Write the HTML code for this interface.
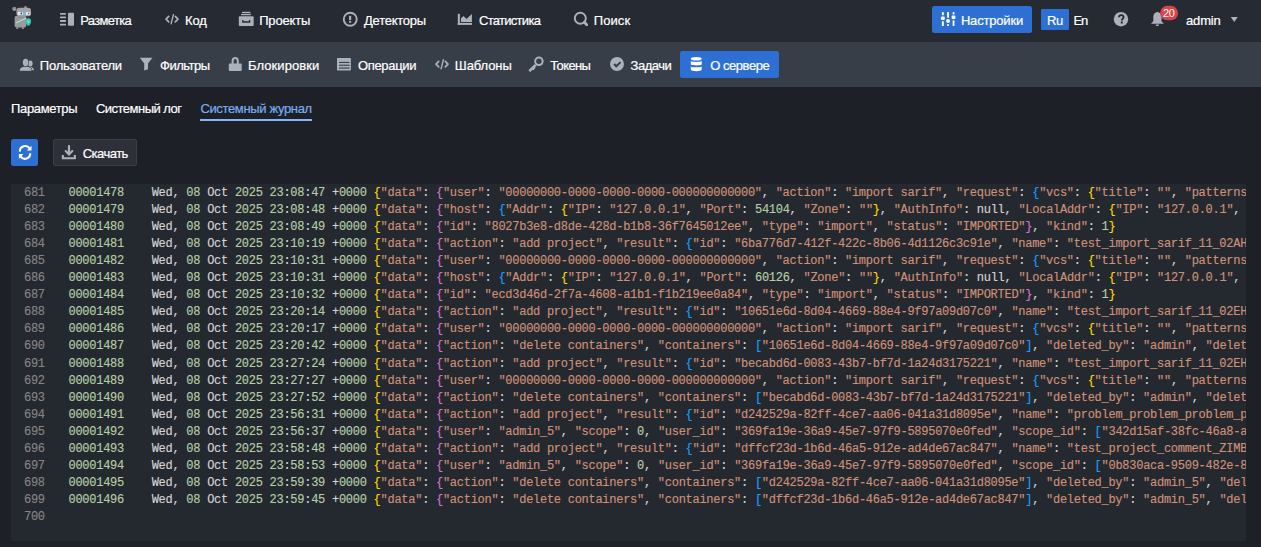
<!DOCTYPE html>
<html><head><meta charset="utf-8"><style>
*{margin:0;padding:0;box-sizing:border-box}
html,body{width:1261px;height:547px;overflow:hidden;background:#1d2026;font-family:"Liberation Sans",sans-serif;color:#fff}
.abs{position:absolute}
.t{position:absolute;font-size:13px;line-height:16px;white-space:nowrap;color:#fff;-webkit-text-stroke:0.2px currentColor}
#hdr{position:absolute;left:0;top:0;width:1261px;height:42px;background:#262a33}
#sub{position:absolute;left:0;top:42px;width:1261px;height:45px;background:#383e48}
svg.ic{position:absolute;overflow:visible}
.btn{position:absolute;background:#2e6fd4;border-radius:2.5px}
#panel{position:absolute;left:11px;top:184px;width:1235px;height:357px;background:#24282f;overflow:hidden}
.ln{position:absolute;left:0;height:17.1px;width:1235px;font-family:"Liberation Mono",monospace;font-size:12px;letter-spacing:-0.27px;line-height:17.1px;white-space:pre;color:#d4d4d4;-webkit-text-stroke:0.15px currentColor}
.ln b{position:absolute;left:13px;font-weight:normal;color:#858585}
.ln span{position:absolute;left:57.5px}
i{font-style:normal}
i.n{color:#b5cea8}
i.s{color:#ce9178}
</style></head><body>
<div id="hdr"></div>
<div id="sub"></div>

<div class="btn" style="left:932px;top:6px;width:100px;height:27px"></div>
<div class="btn" style="left:1041px;top:9px;width:28px;height:21px;border-radius:1px"></div>
<div class="btn" style="left:680px;top:51px;width:99px;height:27px"></div>
<div class="abs" style="left:200px;top:119px;width:112px;height:2px;background:#86b6f6"></div>
<div class="btn" style="left:11px;top:139px;width:27px;height:27px"></div>
<div class="abs" style="left:53px;top:139px;width:84px;height:27px;background:#2d3038;border:1px solid #3b3f47;border-radius:2px"></div>
<div class="t" style="left:80.3px;top:13.0px;letter-spacing:-0.686px;color:#ffffff">Разметка</div>
<div class="t" style="left:185.1px;top:13.0px;letter-spacing:-0.15px;color:#ffffff">Код</div>
<div class="t" style="left:259.2px;top:13.0px;letter-spacing:-0.183px;color:#ffffff">Проекты</div>
<div class="t" style="left:364.0px;top:13.0px;letter-spacing:-0.238px;color:#ffffff">Детекторы</div>
<div class="t" style="left:479.0px;top:13.0px;letter-spacing:-0.711px;color:#ffffff">Статистика</div>
<div class="t" style="left:593.7px;top:13.0px;letter-spacing:0.1px;color:#ffffff">Поиск</div>
<div class="t" style="left:960.9px;top:13.0px;letter-spacing:-0.175px;color:#ffffff">Настройки</div>
<div class="t" style="left:1047.0px;top:13.0px;letter-spacing:-0.5px;color:#ffffff">Ru</div>
<div class="t" style="left:1073.4px;top:13.0px;letter-spacing:-1.0px;color:#ffffff">En</div>
<div class="t" style="left:1186.0px;top:13.0px;letter-spacing:-0.15px;color:#ffffff">admin</div>
<div class="t" style="left:39.85px;top:58.0px;letter-spacing:-0.241px;color:#ffffff">Пользователи</div>
<div class="t" style="left:160.0px;top:58.0px;letter-spacing:-0.5px;color:#ffffff">Фильтры</div>
<div class="t" style="left:248.1px;top:58.0px;letter-spacing:0.056px;color:#ffffff">Блокировки</div>
<div class="t" style="left:357.9px;top:58.0px;letter-spacing:-0.314px;color:#ffffff">Операции</div>
<div class="t" style="left:454.8px;top:58.0px;letter-spacing:-0.083px;color:#ffffff">Шаблоны</div>
<div class="t" style="left:550.2px;top:58.0px;letter-spacing:-0.6px;color:#ffffff">Токены</div>
<div class="t" style="left:630.5px;top:58.0px;letter-spacing:-0.46px;color:#ffffff">Задачи</div>
<div class="t" style="left:710.2px;top:58.0px;letter-spacing:-0.45px;color:#ffffff">О сервере</div>
<div class="t" style="left:11.1px;top:101.0px;letter-spacing:-0.362px;color:#ffffff">Параметры</div>
<div class="t" style="left:95.9px;top:101.0px;letter-spacing:-0.508px;color:#ffffff">Системный лог</div>
<div class="t" style="left:200.4px;top:101.0px;letter-spacing:-0.347px;color:#78aef0">Системный журнал</div>
<div class="t" style="left:82.7px;top:146.0px;letter-spacing:-0.517px;color:#ffffff">Скачать</div>
<svg width="1261" height="547" viewBox="0 0 1261 547" style="position:absolute;left:0;top:0;pointer-events:none">
<g fill="#acb1ba" stroke="none">
  <!-- Разметка icon -->
  <rect x="60" y="12.9" width="6" height="1.8" rx="0.6"/>
  <rect x="60" y="16.5" width="6" height="1.8" rx="0.6"/>
  <rect x="60" y="20.1" width="6" height="1.8" rx="0.6"/>
  <rect x="60" y="23.7" width="6" height="1.8" rx="0.6"/>
  <rect x="68" y="12.8" width="6" height="12.9" rx="0.8"/>
  <!-- Projects (archive) -->
  <rect x="242" y="11.8" width="8.5" height="1.3" rx="0.4"/>
  <rect x="241" y="13.8" width="10" height="1.4" rx="0.4"/>
  <rect x="238.8" y="16.3" width="14.9" height="9.6" rx="1"/>
  <!-- Stats -->
  <rect x="457.8" y="13.8" width="2.1" height="11.1"/>
  <rect x="457.8" y="22.9" width="14.2" height="2"/>
  <path d="M461 21.9 L461 18.2 L463.5 16 L466.5 18.9 L471.9 14 L471.9 21.9 Z"/>
  <!-- Sub nav: users -->
  <ellipse cx="30.3" cy="63.4" rx="2.3" ry="3"/>
  <path d="M29 66.5 C31.5 66.8 33.9 67.6 33.9 69.8 L33.9 70.3 L30 70.3 Z"/>
  <g stroke="#383e48" stroke-width="1.1">
  <ellipse cx="25.6" cy="62.4" rx="2.75" ry="3.6"/>
  <path d="M19.6 70.9 C19.6 67.7 21.8 66.5 25.6 66.5 C29.4 66.5 31.8 67.7 31.8 70.9 Z"/>
  </g>
  <ellipse cx="25.6" cy="62.4" rx="2.75" ry="3.6"/>
  <path d="M19.8 70.7 C19.8 67.7 22 66.7 25.6 66.7 C29.2 66.7 31.6 67.7 31.6 70.7 Z"/>
  <!-- filter -->
  <path d="M139.8 57.8 L152.5 57.8 L148 63.4 L148 69.3 L144.2 70.5 L144.2 63.4 Z"/>
  <!-- lock body -->
  <rect x="228.8" y="63.6" width="12.9" height="7.3" rx="0.8"/>
  <!-- operations -->
  <rect x="337" y="58" width="13.9" height="12.5" rx="0.8"/>
  <!-- check circle -->
  <circle cx="617" cy="64" r="6.95"/>
  <!-- download tray -->
  <path d="M61.8 154.9 H63.9 V157.3 H73.8 V154.9 H75.9 V159.3 H61.8 Z"/>
  <!-- ? circle -->
  <circle cx="1121" cy="19.2" r="7.2"/>
  <!-- bell -->
  <path d="M1157.4 12 C1154.2 12.6 1153.3 15 1153.3 17.6 L1153.3 21.2 L1150.9 23.8 L1163.9 23.8 L1161.5 21.2 L1161.5 17.6 C1161.5 15 1160.6 12.6 1157.4 12 Z"/>
  <path d="M1155.7 24.4 H1159 C1159 25.4 1158.3 26.1 1157.35 26.1 C1156.4 26.1 1155.7 25.4 1155.7 24.4 Z"/>
  <!-- caret -->
  <path d="M1230.7 16.9 L1237.8 16.9 L1234.25 22 Z"/>
</g>
<g fill="none" stroke="#acb1ba" stroke-width="2">
  <!-- </> top -->
  <path d="M168.7 16.3 L166 19.05 L168.7 21.8" stroke-width="1.7" stroke-linecap="round" stroke-linejoin="round"/>
  <path d="M175.3 16.3 L178 19.05 L175.3 21.8" stroke-width="1.7" stroke-linecap="round" stroke-linejoin="round"/>
  <path d="M173.4 14.7 L171.1 23.8" stroke-width="1.4" stroke-linecap="round"/>
  <!-- </> sub -->
  <path d="M438.7 61.3 L436 64.05 L438.7 66.8" stroke-width="1.7" stroke-linecap="round" stroke-linejoin="round"/>
  <path d="M445.3 61.3 L448 64.05 L445.3 66.8" stroke-width="1.7" stroke-linecap="round" stroke-linejoin="round"/>
  <path d="M443.4 59.7 L441.1 68.8" stroke-width="1.4" stroke-linecap="round"/>
  <!-- detector circle -->
  <circle cx="350.25" cy="19.25" r="6.5" stroke-width="1.9"/>
  <!-- search -->
  <circle cx="580.3" cy="18.3" r="5.5" stroke-width="1.9"/>
  <path d="M584.3 22.3 L586.7 24.7" stroke-width="2.8" stroke-linecap="round"/>
  <!-- lock shackle -->
  <path d="M232.6 64 V61 C232.6 58.6 233.6 57.9 235.2 57.9 C236.8 57.9 237.8 58.6 237.8 61 V64" stroke-width="2"/>
  <!-- key ring -->
  <circle cx="538.9" cy="61.3" r="3.75" stroke-width="2"/>
  <!-- download arrow -->
  <path d="M69 145.2 V155" stroke-width="2.2"/>
  <path d="M65.7 151 L69 154.4 L72.3 151" stroke-width="2.1" stroke-linecap="round"/>
</g>
<g fill="#acb1ba">
  <!-- key shaft & teeth -->
  <path d="M534.8 63.9 L536.7 65.8 L530.3 72 L528.4 70.2 Z"/>
  <path d="M531.2 67.9 L533.5 65.8 L535.6 68 L533.4 70.3 L532.6 69.5 L531.8 70.3 Z"/>
</g>
<!-- detector exclamation -->
<rect x="349" y="15.8" width="2.2" height="4.3" fill="#acb1ba"/>
<rect x="349" y="20.9" width="2.2" height="1.8" fill="#acb1ba"/>
<!-- operations lines -->
<g fill="#383e48">
  <rect x="339" y="61.9" width="10.5" height="1.1"/>
  <rect x="339" y="64.7" width="10.5" height="1.1"/>
  <rect x="339" y="67.5" width="10.5" height="1.1"/>
</g>
<!-- archive handle -->
<path d="M242.8 19.9 V22 H249.6 V19.9" fill="none" stroke="#262a33" stroke-width="1.3"/>
<!-- check mark -->
<path d="M614.1 64 L616.3 66.3 L620.5 62.1" fill="none" stroke="#383e48" stroke-width="2"/>
<!-- ? glyph -->
<path d="M1119 17.3 C1119 15.8 1119.9 15.1 1121.2 15.1 C1122.6 15.1 1123.5 15.9 1123.5 17.1 C1123.5 18.7 1121.8 18.9 1121.8 20.5" fill="none" stroke="#262a33" stroke-width="1.9"/>
<rect x="1120.8" y="21.5" width="2" height="2" fill="#262a33"/>
<!-- sliders icon (white) -->
<g fill="#ffffff">
  <rect x="941.9" y="11.9" width="1.9" height="3.4" rx="0.9"/>
  <rect x="940.9" y="16.6" width="3.9" height="3.4" rx="1.2"/>
  <rect x="941.9" y="21.2" width="1.9" height="4.8" rx="0.6"/>
  <rect x="947.1" y="11.9" width="1.9" height="5.9" rx="0.6"/>
  <circle cx="948.05" cy="20.9" r="2"/>
  <rect x="947.1" y="24" width="1.9" height="2" rx="0.5"/>
  <rect x="952.6" y="11.9" width="1.9" height="2.6" rx="0.9"/>
  <rect x="951.7" y="15.6" width="3.7" height="3.4" rx="0.8"/>
  <rect x="952.6" y="20.3" width="1.9" height="5.8" rx="0.6"/>
</g>
<!-- DB icon (white) -->
<g fill="#ffffff">
  <ellipse cx="696.25" cy="58.8" rx="5.45" ry="1.8"/>
  <path d="M690.8 61 C692.5 62.2 700 62.2 701.7 61 V64.6 C700 65.8 692.5 65.8 690.8 64.6 Z"/>
  <path d="M690.8 66.4 C692.5 67.6 700 67.6 701.7 66.4 V69.6 C701.7 70.8 699 71.3 696.25 71.3 C693.5 71.3 690.8 70.8 690.8 69.6 Z"/>
</g>
<!-- sync icon (white) -->
<g fill="none" stroke="#ffffff" stroke-width="2.1">
  <path d="M19.9 151.6 A5.3 5.3 0 0 1 29.6 148.4"/>
  <path d="M30.2 153.2 A5.3 5.3 0 0 1 20.5 156.4"/>
</g>
<g fill="#ffffff">
  <path d="M31.5 145.8 L31.5 150.6 L26.9 150.6 Z"/>
  <path d="M18.9 158.8 L18.9 154 L23.5 154 Z"/>
</g>
<!-- badge -->
<rect x="1160.1" y="5.85" width="17.9" height="14.4" rx="7.2" fill="#d9434b"/>
<!-- logo -->
<g>
  <circle cx="14.3" cy="8.9" r="2.1" fill="#8c8c8c"/>
  <circle cx="14.4" cy="9.4" r="0.75" fill="#7cc0f0"/>
  <circle cx="25.5" cy="7.3" r="1.4" fill="#8c8c8c"/>
  <path d="M16.4 10.5 C16.4 8.6 17.6 7.8 19.5 7.8 L28 7.8 C30 7.8 31 9 31 11 L31 13.5 C31 15.5 30 16.3 28 16.3 L19.5 16.3 C17.6 16.3 16.4 15.5 16.4 13.5 Z" fill="#a3a3a3"/>
  <path d="M14.6 18 C14.6 16.6 15.5 15.8 17 15.8 L24 15.8 C25.5 15.8 26.2 16.6 26.2 18 L26.2 25.5 C26.2 26.8 25.5 27.5 24 27.5 L17 27.5 C15.5 27.5 14.6 26.8 14.6 25.5 Z" fill="#9b9b9b"/>
  <rect x="17.4" y="16.8" width="6.5" height="1" fill="#888"/>
  <rect x="16.2" y="26.8" width="2.2" height="2.2" rx="0.6" fill="#8a8a8a"/>
  <rect x="21.8" y="26.8" width="2.2" height="2.2" rx="0.6" fill="#8a8a8a"/>
  <rect x="17.8" y="12" width="12.4" height="2.9" fill="#ececec"/>
  <rect x="20.6" y="12.6" width="1.5" height="1.7" fill="#2a2d35"/>
  <rect x="23" y="11.8" width="3.1" height="3.2" fill="#6db6ee"/>
  <rect x="28.2" y="12.7" width="1.2" height="1.5" fill="#4a5060"/>
  <path d="M15.6 22.5 L26.2 17.5 L26.7 18.5 L16.1 23.5 Z" fill="#9fe3da"/>
  <path d="M25.8 19.3 L28.4 18.1 L31 19.3 L31 22.6 C30.6 24.5 29.4 25.6 28.4 26.1 C27.2 25.5 25.8 24.3 25.8 22.6 Z" fill="#31c2ae"/>
  <path d="M27.3 20.6 L29.5 20.6 L29.5 22.2 C29.2 23 28.8 23.3 28.4 23.5 C28 23.3 27.3 23 27.3 22.2 Z" fill="#7fdccf"/>
</g>
</svg>
<div class="t" style="left:1163px;top:5px;font-size:11px;line-height:16px;letter-spacing:-0.3px;-webkit-text-stroke:0">20</div>

<div id="panel">
<div class="ln" style="top:0.50px"><b>681</b><span><i class="n">00001478</i>    Wed, <i class="n">08</i> Oct <i class="n">2025</i> <i class="n">23</i>:<i class="n">08</i>:<i class="n">47</i> +<i class="n">0000</i> <i style="color:#ffd700">{</i><i class="s">"data"</i>: <i style="color:#da70d6">{</i><i class="s">"user"</i>: <i class="s">"00000000-0000-0000-0000-000000000000"</i>, <i class="s">"action"</i>: <i class="s">"import sarif"</i>, <i class="s">"request"</i>: <i style="color:#179fff">{</i><i class="s">"vcs"</i>: <i style="color:#ffd700">{</i><i class="s">"title"</i>: <i class="s">""</i>, <i class="s">"patterns"</i>: <i style="color:#da70d6">[</i><i style="color:#da70d6">]</i><i style="color:#ffd700">}</i><i style="color:#179fff">}</i></span></div>
<div class="ln" style="top:17.60px"><b>682</b><span><i class="n">00001479</i>    Wed, <i class="n">08</i> Oct <i class="n">2025</i> <i class="n">23</i>:<i class="n">08</i>:<i class="n">48</i> +<i class="n">0000</i> <i style="color:#ffd700">{</i><i class="s">"data"</i>: <i style="color:#da70d6">{</i><i class="s">"host"</i>: <i style="color:#179fff">{</i><i class="s">"Addr"</i>: <i style="color:#ffd700">{</i><i class="s">"IP"</i>: <i class="s">"127.0.0.1"</i>, <i class="s">"Port"</i>: <i class="n">54104</i>, <i class="s">"Zone"</i>: <i class="s">""</i><i style="color:#ffd700">}</i>, <i class="s">"AuthInfo"</i>: null, <i class="s">"LocalAddr"</i>: <i style="color:#ffd700">{</i><i class="s">"IP"</i>: <i class="s">"127.0.0.1"</i>, <i class="s">"Port"</i>: <i class="n">8080</i><i style="color:#ffd700">}</i><i style="color:#179fff">}</i><i style="color:#da70d6">}</i><i style="color:#ffd700">}</i></span></div>
<div class="ln" style="top:34.70px"><b>683</b><span><i class="n">00001480</i>    Wed, <i class="n">08</i> Oct <i class="n">2025</i> <i class="n">23</i>:<i class="n">08</i>:<i class="n">49</i> +<i class="n">0000</i> <i style="color:#ffd700">{</i><i class="s">"data"</i>: <i style="color:#da70d6">{</i><i class="s">"id"</i>: <i class="s">"8027b3e8-d8de-428d-b1b8-36f7645012ee"</i>, <i class="s">"type"</i>: <i class="s">"import"</i>, <i class="s">"status"</i>: <i class="s">"IMPORTED"</i><i style="color:#da70d6">}</i>, <i class="s">"kind"</i>: <i class="n">1</i><i style="color:#ffd700">}</i></span></div>
<div class="ln" style="top:51.80px"><b>684</b><span><i class="n">00001481</i>    Wed, <i class="n">08</i> Oct <i class="n">2025</i> <i class="n">23</i>:<i class="n">10</i>:<i class="n">19</i> +<i class="n">0000</i> <i style="color:#ffd700">{</i><i class="s">"data"</i>: <i style="color:#da70d6">{</i><i class="s">"action"</i>: <i class="s">"add project"</i>, <i class="s">"result"</i>: <i style="color:#179fff">{</i><i class="s">"id"</i>: <i class="s">"6ba776d7-412f-422c-8b06-4d1126c3c91e"</i>, <i class="s">"name"</i>: <i class="s">"test_import_sarif_11_02AHXX"</i><i style="color:#179fff">}</i><i style="color:#da70d6">}</i><i style="color:#ffd700">}</i></span></div>
<div class="ln" style="top:68.90px"><b>685</b><span><i class="n">00001482</i>    Wed, <i class="n">08</i> Oct <i class="n">2025</i> <i class="n">23</i>:<i class="n">10</i>:<i class="n">31</i> +<i class="n">0000</i> <i style="color:#ffd700">{</i><i class="s">"data"</i>: <i style="color:#da70d6">{</i><i class="s">"user"</i>: <i class="s">"00000000-0000-0000-0000-000000000000"</i>, <i class="s">"action"</i>: <i class="s">"import sarif"</i>, <i class="s">"request"</i>: <i style="color:#179fff">{</i><i class="s">"vcs"</i>: <i style="color:#ffd700">{</i><i class="s">"title"</i>: <i class="s">""</i>, <i class="s">"patterns"</i>: <i style="color:#da70d6">[</i><i style="color:#da70d6">]</i><i style="color:#ffd700">}</i><i style="color:#179fff">}</i></span></div>
<div class="ln" style="top:86.00px"><b>686</b><span><i class="n">00001483</i>    Wed, <i class="n">08</i> Oct <i class="n">2025</i> <i class="n">23</i>:<i class="n">10</i>:<i class="n">31</i> +<i class="n">0000</i> <i style="color:#ffd700">{</i><i class="s">"data"</i>: <i style="color:#da70d6">{</i><i class="s">"host"</i>: <i style="color:#179fff">{</i><i class="s">"Addr"</i>: <i style="color:#ffd700">{</i><i class="s">"IP"</i>: <i class="s">"127.0.0.1"</i>, <i class="s">"Port"</i>: <i class="n">60126</i>, <i class="s">"Zone"</i>: <i class="s">""</i><i style="color:#ffd700">}</i>, <i class="s">"AuthInfo"</i>: null, <i class="s">"LocalAddr"</i>: <i style="color:#ffd700">{</i><i class="s">"IP"</i>: <i class="s">"127.0.0.1"</i>, <i class="s">"Port"</i>: <i class="n">8080</i><i style="color:#ffd700">}</i><i style="color:#179fff">}</i><i style="color:#da70d6">}</i><i style="color:#ffd700">}</i></span></div>
<div class="ln" style="top:103.10px"><b>687</b><span><i class="n">00001484</i>    Wed, <i class="n">08</i> Oct <i class="n">2025</i> <i class="n">23</i>:<i class="n">10</i>:<i class="n">32</i> +<i class="n">0000</i> <i style="color:#ffd700">{</i><i class="s">"data"</i>: <i style="color:#da70d6">{</i><i class="s">"id"</i>: <i class="s">"ecd3d46d-2f7a-4608-a1b1-f1b219ee0a84"</i>, <i class="s">"type"</i>: <i class="s">"import"</i>, <i class="s">"status"</i>: <i class="s">"IMPORTED"</i><i style="color:#da70d6">}</i>, <i class="s">"kind"</i>: <i class="n">1</i><i style="color:#ffd700">}</i></span></div>
<div class="ln" style="top:120.20px"><b>688</b><span><i class="n">00001485</i>    Wed, <i class="n">08</i> Oct <i class="n">2025</i> <i class="n">23</i>:<i class="n">20</i>:<i class="n">14</i> +<i class="n">0000</i> <i style="color:#ffd700">{</i><i class="s">"data"</i>: <i style="color:#da70d6">{</i><i class="s">"action"</i>: <i class="s">"add project"</i>, <i class="s">"result"</i>: <i style="color:#179fff">{</i><i class="s">"id"</i>: <i class="s">"10651e6d-8d04-4669-88e4-9f97a09d07c0"</i>, <i class="s">"name"</i>: <i class="s">"test_import_sarif_11_02EHXX"</i><i style="color:#179fff">}</i><i style="color:#da70d6">}</i><i style="color:#ffd700">}</i></span></div>
<div class="ln" style="top:137.30px"><b>689</b><span><i class="n">00001486</i>    Wed, <i class="n">08</i> Oct <i class="n">2025</i> <i class="n">23</i>:<i class="n">20</i>:<i class="n">17</i> +<i class="n">0000</i> <i style="color:#ffd700">{</i><i class="s">"data"</i>: <i style="color:#da70d6">{</i><i class="s">"user"</i>: <i class="s">"00000000-0000-0000-0000-000000000000"</i>, <i class="s">"action"</i>: <i class="s">"import sarif"</i>, <i class="s">"request"</i>: <i style="color:#179fff">{</i><i class="s">"vcs"</i>: <i style="color:#ffd700">{</i><i class="s">"title"</i>: <i class="s">""</i>, <i class="s">"patterns"</i>: <i style="color:#da70d6">[</i><i style="color:#da70d6">]</i><i style="color:#ffd700">}</i><i style="color:#179fff">}</i></span></div>
<div class="ln" style="top:154.40px"><b>690</b><span><i class="n">00001487</i>    Wed, <i class="n">08</i> Oct <i class="n">2025</i> <i class="n">23</i>:<i class="n">20</i>:<i class="n">42</i> +<i class="n">0000</i> <i style="color:#ffd700">{</i><i class="s">"data"</i>: <i style="color:#da70d6">{</i><i class="s">"action"</i>: <i class="s">"delete containers"</i>, <i class="s">"containers"</i>: <i style="color:#179fff">[</i><i class="s">"10651e6d-8d04-4669-88e4-9f97a09d07c0"</i><i style="color:#179fff">]</i>, <i class="s">"deleted_by"</i>: <i class="s">"admin"</i>, <i class="s">"deleted"</i>: true<i style="color:#da70d6">}</i><i style="color:#ffd700">}</i></span></div>
<div class="ln" style="top:171.50px"><b>691</b><span><i class="n">00001488</i>    Wed, <i class="n">08</i> Oct <i class="n">2025</i> <i class="n">23</i>:<i class="n">27</i>:<i class="n">24</i> +<i class="n">0000</i> <i style="color:#ffd700">{</i><i class="s">"data"</i>: <i style="color:#da70d6">{</i><i class="s">"action"</i>: <i class="s">"add project"</i>, <i class="s">"result"</i>: <i style="color:#179fff">{</i><i class="s">"id"</i>: <i class="s">"becabd6d-0083-43b7-bf7d-1a24d3175221"</i>, <i class="s">"name"</i>: <i class="s">"test_import_sarif_11_02EHXX"</i><i style="color:#179fff">}</i><i style="color:#da70d6">}</i><i style="color:#ffd700">}</i></span></div>
<div class="ln" style="top:188.60px"><b>692</b><span><i class="n">00001489</i>    Wed, <i class="n">08</i> Oct <i class="n">2025</i> <i class="n">23</i>:<i class="n">27</i>:<i class="n">27</i> +<i class="n">0000</i> <i style="color:#ffd700">{</i><i class="s">"data"</i>: <i style="color:#da70d6">{</i><i class="s">"user"</i>: <i class="s">"00000000-0000-0000-0000-000000000000"</i>, <i class="s">"action"</i>: <i class="s">"import sarif"</i>, <i class="s">"request"</i>: <i style="color:#179fff">{</i><i class="s">"vcs"</i>: <i style="color:#ffd700">{</i><i class="s">"title"</i>: <i class="s">""</i>, <i class="s">"patterns"</i>: <i style="color:#da70d6">[</i><i style="color:#da70d6">]</i><i style="color:#ffd700">}</i><i style="color:#179fff">}</i></span></div>
<div class="ln" style="top:205.70px"><b>693</b><span><i class="n">00001490</i>    Wed, <i class="n">08</i> Oct <i class="n">2025</i> <i class="n">23</i>:<i class="n">27</i>:<i class="n">52</i> +<i class="n">0000</i> <i style="color:#ffd700">{</i><i class="s">"data"</i>: <i style="color:#da70d6">{</i><i class="s">"action"</i>: <i class="s">"delete containers"</i>, <i class="s">"containers"</i>: <i style="color:#179fff">[</i><i class="s">"becabd6d-0083-43b7-bf7d-1a24d3175221"</i><i style="color:#179fff">]</i>, <i class="s">"deleted_by"</i>: <i class="s">"admin"</i>, <i class="s">"deleted"</i>: true<i style="color:#da70d6">}</i><i style="color:#ffd700">}</i></span></div>
<div class="ln" style="top:222.80px"><b>694</b><span><i class="n">00001491</i>    Wed, <i class="n">08</i> Oct <i class="n">2025</i> <i class="n">23</i>:<i class="n">56</i>:<i class="n">31</i> +<i class="n">0000</i> <i style="color:#ffd700">{</i><i class="s">"data"</i>: <i style="color:#da70d6">{</i><i class="s">"action"</i>: <i class="s">"add project"</i>, <i class="s">"result"</i>: <i style="color:#179fff">{</i><i class="s">"id"</i>: <i class="s">"d242529a-82ff-4ce7-aa06-041a31d8095e"</i>, <i class="s">"name"</i>: <i class="s">"problem_problem_problem_problem"</i><i style="color:#179fff">}</i><i style="color:#da70d6">}</i><i style="color:#ffd700">}</i></span></div>
<div class="ln" style="top:239.90px"><b>695</b><span><i class="n">00001492</i>    Wed, <i class="n">08</i> Oct <i class="n">2025</i> <i class="n">23</i>:<i class="n">56</i>:<i class="n">37</i> +<i class="n">0000</i> <i style="color:#ffd700">{</i><i class="s">"data"</i>: <i style="color:#da70d6">{</i><i class="s">"user"</i>: <i class="s">"admin_5"</i>, <i class="s">"scope"</i>: <i class="n">0</i>, <i class="s">"user_id"</i>: <i class="s">"369fa19e-36a9-45e7-97f9-5895070e0fed"</i>, <i class="s">"scope_id"</i>: <i style="color:#179fff">[</i><i class="s">"342d15af-38fc-46a8-a000-000000000000"</i><i style="color:#179fff">]</i><i style="color:#da70d6">}</i><i style="color:#ffd700">}</i></span></div>
<div class="ln" style="top:257.00px"><b>696</b><span><i class="n">00001493</i>    Wed, <i class="n">08</i> Oct <i class="n">2025</i> <i class="n">23</i>:<i class="n">58</i>:<i class="n">48</i> +<i class="n">0000</i> <i style="color:#ffd700">{</i><i class="s">"data"</i>: <i style="color:#da70d6">{</i><i class="s">"action"</i>: <i class="s">"add project"</i>, <i class="s">"result"</i>: <i style="color:#179fff">{</i><i class="s">"id"</i>: <i class="s">"dffcf23d-1b6d-46a5-912e-ad4de67ac847"</i>, <i class="s">"name"</i>: <i class="s">"test_project_comment_ZIMBXX"</i><i style="color:#179fff">}</i><i style="color:#da70d6">}</i><i style="color:#ffd700">}</i></span></div>
<div class="ln" style="top:274.10px"><b>697</b><span><i class="n">00001494</i>    Wed, <i class="n">08</i> Oct <i class="n">2025</i> <i class="n">23</i>:<i class="n">58</i>:<i class="n">53</i> +<i class="n">0000</i> <i style="color:#ffd700">{</i><i class="s">"data"</i>: <i style="color:#da70d6">{</i><i class="s">"user"</i>: <i class="s">"admin_5"</i>, <i class="s">"scope"</i>: <i class="n">0</i>, <i class="s">"user_id"</i>: <i class="s">"369fa19e-36a9-45e7-97f9-5895070e0fed"</i>, <i class="s">"scope_id"</i>: <i style="color:#179fff">[</i><i class="s">"0b830aca-9509-482e-8000-000000000000"</i><i style="color:#179fff">]</i><i style="color:#da70d6">}</i><i style="color:#ffd700">}</i></span></div>
<div class="ln" style="top:291.20px"><b>698</b><span><i class="n">00001495</i>    Wed, <i class="n">08</i> Oct <i class="n">2025</i> <i class="n">23</i>:<i class="n">59</i>:<i class="n">39</i> +<i class="n">0000</i> <i style="color:#ffd700">{</i><i class="s">"data"</i>: <i style="color:#da70d6">{</i><i class="s">"action"</i>: <i class="s">"delete containers"</i>, <i class="s">"containers"</i>: <i style="color:#179fff">[</i><i class="s">"d242529a-82ff-4ce7-aa06-041a31d8095e"</i><i style="color:#179fff">]</i>, <i class="s">"deleted_by"</i>: <i class="s">"admin_5"</i>, <i class="s">"deleted"</i>: true<i style="color:#da70d6">}</i><i style="color:#ffd700">}</i></span></div>
<div class="ln" style="top:308.30px"><b>699</b><span><i class="n">00001496</i>    Wed, <i class="n">08</i> Oct <i class="n">2025</i> <i class="n">23</i>:<i class="n">59</i>:<i class="n">45</i> +<i class="n">0000</i> <i style="color:#ffd700">{</i><i class="s">"data"</i>: <i style="color:#da70d6">{</i><i class="s">"action"</i>: <i class="s">"delete containers"</i>, <i class="s">"containers"</i>: <i style="color:#179fff">[</i><i class="s">"dffcf23d-1b6d-46a5-912e-ad4de67ac847"</i><i style="color:#179fff">]</i>, <i class="s">"deleted_by"</i>: <i class="s">"admin_5"</i>, <i class="s">"deleted"</i>: true<i style="color:#da70d6">}</i><i style="color:#ffd700">}</i></span></div>
<div class="ln" style="top:325.40px"><b>700</b></div>
</div>
</body></html>
